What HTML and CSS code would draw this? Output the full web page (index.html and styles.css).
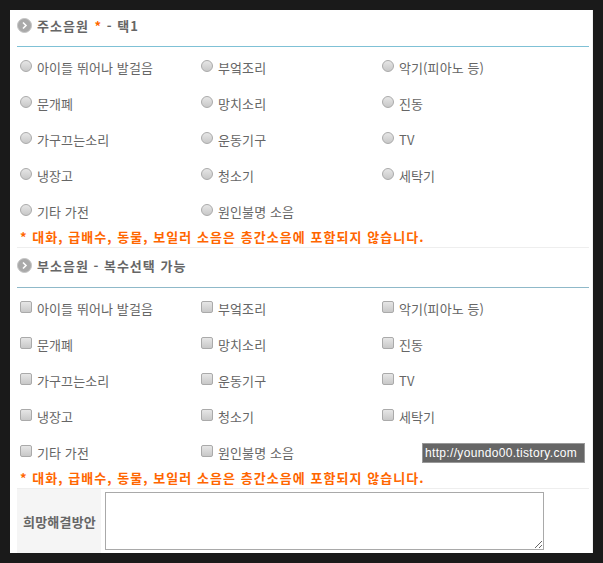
FILE: index.html
```html
<!DOCTYPE html>
<html lang="ko">
<head>
<meta charset="utf-8">
<title>소음원</title>
<link rel="stylesheet" href="styles.css">
</head>
<body>
<main class="panel">
  <section class="block">
    <h2 class="head head-first"><span class="bullet"><svg viewBox="0 0 15 15" width="15" height="15"><circle cx="7.5" cy="7.5" r="7" fill="#a9a9a9" stroke="#c4c4c4"/><path d="M6 4.5l3 3-3 3" fill="none" stroke="#fff" stroke-width="1.6"/></svg></span>주소음원 <em class="star">*</em> - 택1</h2>
    <div class="options">
      <label class="opt"><span class="mark radio"></span>아이들 뛰어나 발걸음</label>
      <label class="opt"><span class="mark radio"></span>부엌조리</label>
      <label class="opt"><span class="mark radio"></span>악기(피아노 등)</label>
      <label class="opt"><span class="mark radio"></span>문개폐</label>
      <label class="opt"><span class="mark radio"></span>망치소리</label>
      <label class="opt"><span class="mark radio"></span>진동</label>
      <label class="opt"><span class="mark radio"></span>가구끄는소리</label>
      <label class="opt"><span class="mark radio"></span>운동기구</label>
      <label class="opt"><span class="mark radio"></span>TV</label>
      <label class="opt"><span class="mark radio"></span>냉장고</label>
      <label class="opt"><span class="mark radio"></span>청소기</label>
      <label class="opt"><span class="mark radio"></span>세탁기</label>
      <label class="opt"><span class="mark radio"></span>기타 가전</label>
      <label class="opt"><span class="mark radio"></span>원인불명 소음</label>
    </div>
    <p class="notice">* 대화, 급배수, 동물, 보일러 소음은 층간소음에 포함되지 않습니다.</p>
  </section>
  <section class="block">
    <h2 class="head head-second"><span class="bullet"><svg viewBox="0 0 15 15" width="15" height="15"><circle cx="7.5" cy="7.5" r="7" fill="#a9a9a9" stroke="#c4c4c4"/><path d="M6 4.5l3 3-3 3" fill="none" stroke="#fff" stroke-width="1.6"/></svg></span>부소음원 - 복수선택 가능</h2>
    <div class="options">
      <label class="opt"><span class="mark check"></span>아이들 뛰어나 발걸음</label>
      <label class="opt"><span class="mark check"></span>부엌조리</label>
      <label class="opt"><span class="mark check"></span>악기(피아노 등)</label>
      <label class="opt"><span class="mark check"></span>문개폐</label>
      <label class="opt"><span class="mark check"></span>망치소리</label>
      <label class="opt"><span class="mark check"></span>진동</label>
      <label class="opt"><span class="mark check"></span>가구끄는소리</label>
      <label class="opt"><span class="mark check"></span>운동기구</label>
      <label class="opt"><span class="mark check"></span>TV</label>
      <label class="opt"><span class="mark check"></span>냉장고</label>
      <label class="opt"><span class="mark check"></span>청소기</label>
      <label class="opt"><span class="mark check"></span>세탁기</label>
      <label class="opt"><span class="mark check"></span>기타 가전</label>
      <label class="opt"><span class="mark check"></span>원인불명 소음</label>
    </div>
    <p class="notice">* 대화, 급배수, 동물, 보일러 소음은 층간소음에 포함되지 않습니다.</p>
  </section>
  <div class="wish">
    <div class="wish-label">희망해결방안</div>
    <div class="wish-field"><textarea class="wish-input"></textarea></div>
  </div>
  <div class="stamp">http://youndo00.tistory.com</div>
</main>
</body>
</html>
```
FILE: styles.css
```css
* { box-sizing: border-box; }
html, body { height: 100%; }
body {
  margin: 0;
  padding: 10px;
  background: #1a1a1a;
  overflow: hidden;
  font-family: "Noto Sans CJK KR", "Liberation Sans", sans-serif;
  font-size: 13px;
  color: #666;
}
.panel {
  position: relative;
  width: 583px;
  height: 543px;
  overflow: hidden;
  background: #fff;
  padding: 0 3px 0 7px;
  border-right: 1px solid #f0f0f0;
}
.block { border-bottom: 1px solid #eee; }
.head {
  display: flex;
  align-items: center;
  margin: 0;
  font-size: 13px;
  font-weight: 700;
  color: #666;
  white-space: pre-wrap;
  letter-spacing: 1px;
}
.head-first { height: 37px; padding-bottom: 6px; border-bottom: 1px solid #7fc1d6; }
.head-second { height: 40px; padding-bottom: 5px; border-bottom: 1px solid #8fb9c9; }
.bullet { display: flex; width: 20px; flex: none; }
.star { font-style: normal; color: #f60; margin: 0 0 0 1px; }
.options {
  display: grid;
  grid-template-columns: repeat(3, 181px);
  grid-auto-rows: 36px;
  padding: 3px 0 0 3px;
}
.opt { display: flex; align-items: center; padding-bottom: 2px; white-space: nowrap; letter-spacing: 0.1px; }
.mark {
  flex: none;
  width: 12px;
  height: 12px;
  margin: -2px 5px 0 0;
  background: linear-gradient(#e6e6e6, #c8c8c8);
  border: 1px solid #aaa;
}
.radio { border-radius: 50%; }
.check { border-radius: 2px; }
.notice {
  display: flex;
  align-items: center;
  height: 21px;
  margin: -4px 0 0;
  padding-left: 3px;
  font-size: 13px;
  font-weight: 700;
  color: #f60;
  letter-spacing: 1.05px;
  white-space: nowrap;
}
.wish { display: flex; height: 65px; }
.wish-label {
  display: flex;
  align-items: center;
  justify-content: center;
  width: 84px;
  padding-left: 1px;
  background: #f5f5f5;
  font-weight: 700;
  color: #666;
  letter-spacing: 0.2px;
}
.wish-field { padding: 3px 0 0 4px; }
.wish-input {
  display: block;
  width: 439px;
  height: 58px;
  margin: 0;
  padding: 2px;
  border: 1px solid #a9a9a9;
  background: #fff;
}
.stamp {
  position: absolute;
  left: 412px;
  top: 433px;
  width: 163px;
  height: 20px;
  padding-left: 2px;
  background: #666;
  border: 1px solid #999;
  color: #fff;
  font-family: "Liberation Sans", sans-serif;
  font-size: 12px;
  line-height: 18px;
  letter-spacing: 0.33px;
  white-space: nowrap;
}
```
